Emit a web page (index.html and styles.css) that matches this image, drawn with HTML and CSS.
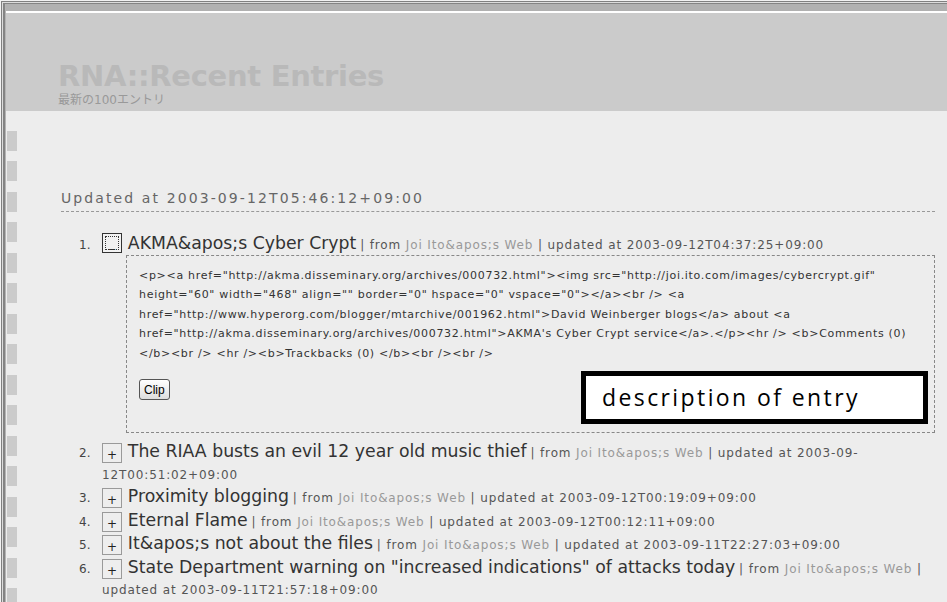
FILE: index.html
```html
<!DOCTYPE html>
<html lang="ja">

<head>
    <meta charset="UTF-8">
    <title>RNA::Recent Entries</title>
    <link rel="stylesheet" href="styles.css">
</head>

<body>
    <div class="frame">
        <header class="masthead">
            <h1 class="site-title">RNA::Recent Entries</h1>
            <p class="site-sub">最新の100エントリ</p>
        </header>

        <div class="page">
            <div class="rail"></div>

            <main class="entries">
                <h2 class="updated">Updated at 2003-09-12T05:46:12+09:00</h2>

                <ol class="entry-list">
                    <li class="entry">
                        <button class="toggle toggle-open">_</button>
                        <span class="entry-title">AKMA&amp;apos;s Cyber Crypt</span>
                        <span class="meta">| from <a href="#">Joi Ito&amp;apos;s Web</a> | updated at 2003-09-12T04:37:25+09:00</span>
                        <div class="desc">
                            <p class="desc-text">&lt;p&gt;&lt;a href="http://akma.disseminary.org/archives/000732.html"&gt;&lt;img src="http://joi.ito.com/images/cybercrypt.gif" height="60" width="468" align="" border="0" hspace="0" vspace="0"&gt;&lt;/a&gt;&lt;br /&gt; &lt;a href="http://www.hyperorg.com/blogger/mtarchive/001962.html"&gt;David Weinberger blogs&lt;/a&gt; about &lt;a href="http://akma.disseminary.org/archives/000732.html"&gt;AKMA's Cyber Crypt service&lt;/a&gt;.&lt;/p&gt;&lt;hr /&gt; &lt;b&gt;Comments (0) &lt;/b&gt;&lt;br /&gt; &lt;hr /&gt;&lt;b&gt;Trackbacks (0) &lt;/b&gt;&lt;br /&gt;&lt;br /&gt;</p>
                            <button class="clip">Clip</button>
                            <div class="callout">description of entry</div>
                        </div>
                    </li>
                    <li class="entry">
                        <button class="toggle">+</button>
                        <span class="entry-title">The RIAA busts an evil 12 year old music thief</span>
                        <span class="meta">| from <a href="#">Joi Ito&amp;apos;s Web</a> | updated at 2003-09-12T00:51:02+09:00</span>
                    </li>
                    <li class="entry">
                        <button class="toggle">+</button>
                        <span class="entry-title">Proximity blogging</span>
                        <span class="meta">| from <a href="#">Joi Ito&amp;apos;s Web</a> | updated at 2003-09-12T00:19:09+09:00</span>
                    </li>
                    <li class="entry">
                        <button class="toggle">+</button>
                        <span class="entry-title">Eternal Flame</span>
                        <span class="meta">| from <a href="#">Joi Ito&amp;apos;s Web</a> | updated at 2003-09-12T00:12:11+09:00</span>
                    </li>
                    <li class="entry">
                        <button class="toggle">+</button>
                        <span class="entry-title">It&amp;apos;s not about the files</span>
                        <span class="meta">| from <a href="#">Joi Ito&amp;apos;s Web</a> | updated at 2003-09-11T22:27:03+09:00</span>
                    </li>
                    <li class="entry">
                        <button class="toggle">+</button>
                        <span class="entry-title">State Department warning on "increased indications" of attacks today</span>
                        <span class="meta">| from <a href="#">Joi Ito&amp;apos;s Web</a> | updated at 2003-09-11T21:57:18+09:00</span>
                    </li>
                </ol>
            </main>
        </div>
    </div>
</body>

</html>
```

FILE: styles.css
```css
html,
body {
    margin: 0;
    background: #ededed;
    font-family: 'DejaVu Sans', 'Noto Sans CJK JP', sans-serif;
    color: #444;
}

/* window frame lines on the top and left */
.frame {
    min-height: 100vh;
    box-sizing: border-box;
    padding: 4px 0 0 6px;
    box-shadow: inset 1px 1px 0 #f2f2f2, inset 2px 2px 0 #808080, inset 3px 3px 0 #dcdcdc, inset 5px 4px 0 #848484, inset 6px 4px 0 #b4b4b4;
}

.masthead {
    border-top: 7px solid #b1b1b1;
    box-shadow: inset 0 2px 0 #ffffff;
    background: #cbcbcb;
    height: 107px;
    box-sizing: border-box;
    padding: 48px 0 0 52px;
}

.site-title {
    margin: 0;
    font-size: 29px;
    line-height: 34px;
    font-weight: bold;
    color: #b9b9b9;
    letter-spacing: -0.3px;
}

.site-sub {
    margin: 0;
    font-size: 12px;
    line-height: 14px;
    color: #999;
}

.page {
    display: flex;
}

/* striped edge */
.rail {
    width: 10px;
    margin: 20px 0 0 1px;
    background: repeating-linear-gradient(to bottom, #cbcbcb 0, #cbcbcb 20px, transparent 20px, transparent 30.47px);
}

.entries {
    flex: 1;
    padding: 0 12px 0 44px;
}

.updated {
    margin: 79px 0 0;
    padding-bottom: 5px;
    border-bottom: 1px dashed #999;
    font-size: 14px;
    line-height: 16px;
    font-weight: normal;
    letter-spacing: 2.1px;
    color: #666;
}

.entry-list {
    margin: 21px 0 0;
    padding-left: 41px;
}

.entry {
    font-size: 12px;
    line-height: 21.5px;
    color: #555;
}

.entry::marker {
    content: counter(list-item) ". \00a0\00a0";
    color: #444;
}

.toggle {
    display: inline-block;
    box-sizing: border-box;
    width: 20px;
    height: 20px;
    margin: 0 2px 0 0;
    padding: 4px 0 0;
    vertical-align: -2px;
    border: 1px solid #9a9a9a;
    background: #eeeeee;
    font-family: 'DejaVu Sans', sans-serif;
    font-size: 12px;
    line-height: 14px;
    color: #222;
    text-align: center;
}

.toggle-open {
    padding-top: 0;
    vertical-align: 2px;
    border-color: #333;
    background: #f2f2f2;
    outline: 1px dotted #333;
    outline-offset: -4px;
}

.entry-title {
    font-size: 17.3px;
    line-height: 21px;
    color: #333;
}

.meta {
    letter-spacing: 0.87px;
}

.meta a {
    color: #999;
    text-decoration: none;
}

.desc {
    position: relative;
    margin: -2px 0 8px 24px;
    padding: 10px 12px 31px;
    border: 1px dashed #888;
}

.desc-text {
    margin: 0;
    font-size: 11px;
    line-height: 19.5px;
    letter-spacing: 0.7px;
    color: #333;
}

.clip {
    margin-top: 16px;
    height: 21px;
    padding: 0 4px;
    border: 1px solid #555;
    border-radius: 3px;
    background: linear-gradient(#ffffff, #dddddd);
    font-family: 'Liberation Sans', sans-serif;
    font-size: 12px;
    color: #000;
}

/* annotation label over the box */
.callout {
    position: absolute;
    right: 6px;
    top: 115px;
    width: 347px;
    height: 53px;
    box-sizing: border-box;
    border: 5px solid #000;
    background: #fff;
    padding-left: 16px;
    font-family: 'Open Sans', sans-serif;
    font-size: 23px;
    line-height: 42px;
    letter-spacing: 2.4px;
    color: #000;
}
```
